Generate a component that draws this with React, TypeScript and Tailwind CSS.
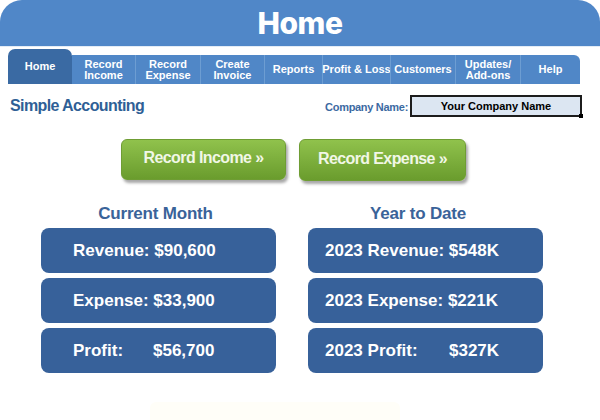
import React from "react";

const tabs = [
  { label: ["Record", "Income"], w: 63 },
  { label: ["Record", "Expense"], w: 65 },
  { label: ["Create", "Invoice"], w: 64 },
  { label: ["Reports"], w: 58 },
  { label: ["Profit & Loss"], w: 68 },
  { label: ["Customers"], w: 65 },
  { label: ["Updates/", "Add-ons"], w: 65 },
  { label: ["Help"], w: 60 },
];

const monthRows = [
  { label: "Revenue:", value: "$90,600", gap: false },
  { label: "Expense:", value: "$33,900", gap: false },
  { label: "Profit:", value: "$56,700", gap: true },
];

const yearRows = [
  { label: "2023 Revenue:", value: "$548K", gap: false },
  { label: "2023 Expense:", value: "$221K", gap: false },
  { label: "2023 Profit:", value: "$327K", gap: true },
];

function StatCard({
  label,
  value,
  gap,
  pad,
  labelW,
}: {
  label: string;
  value: string;
  gap: boolean;
  pad: string;
  labelW: string;
}) {
  return (
    <div
      className={`flex h-[45px] items-center rounded-[8px] bg-[#37619a] text-[17px] font-bold text-white ${pad}`}
    >
      {gap ? (
        <>
          <span className={labelW}>{label}</span>
          <span>{value}</span>
        </>
      ) : (
        <span>
          {label} {value}
        </span>
      )}
    </div>
  );
}

export default function App() {
  return (
    <div
      className="relative h-[420px] w-[600px] overflow-hidden bg-white"
      style={{ fontFamily: '"Liberation Sans", Arial, sans-serif' }}
    >
      {/* Title bar */}
      <div className="flex h-[46px] items-center justify-center rounded-t-[22px] bg-[#5087c8]">
        <span
          className="text-[30px] font-extrabold leading-none tracking-[-0.5px] text-white"
          style={{ fontFamily: "Inter, sans-serif" }}
        >
          Home
        </span>
      </div>
      <div className="h-[1px] bg-[#e3ecf6]" />

      {/* Tab bar */}
      <div className="ml-[8px] mt-[2px] flex h-[35px] w-[572px] items-end">
        <div className="flex h-[35px] w-[64px] items-center justify-center rounded-t-[7px] bg-[#3a6aa3] text-[11px] font-bold text-white">
          Home
        </div>
        <div className="flex h-[29px] flex-1 rounded-tr-[6px] bg-[#5087c7]">
          {tabs.map((t, i) => (
            <div
              key={i}
              className={`flex flex-col items-center justify-center text-center text-[11px] font-bold leading-[11px] text-white ${
                i > 0 ? "border-l border-[#6d9dd2]" : ""
              }`}
              style={{ width: t.w }}
            >
              {t.label.map((l) => (
                <span key={l} className="whitespace-nowrap">
                  {l}
                </span>
              ))}
            </div>
          ))}
        </div>
      </div>

      {/* Title + company name */}
      <div className="mt-[11px] flex h-[22px] items-center justify-between pl-[10px] pr-[18px]">
        <span className="text-[16px] font-bold tracking-[-0.6px] text-[#2f5f96]">
          Simple Accounting
        </span>
        <div className="flex items-center gap-[2px]">
          <span className="pt-[3px] text-[11px] font-bold tracking-[-0.3px] text-[#3c6aa2]">
            Company Name:
          </span>
          <div className="relative flex h-[22px] w-[172px] items-center justify-center border-2 border-[#1c1c1c] bg-[#dce6f2] text-[11px] font-bold text-black">
            Your Company Name
            <div className="absolute -bottom-[3px] -right-[3px] h-[4px] w-[4px] bg-black" />
          </div>
        </div>
      </div>

      {/* Green buttons */}
      <div className="mt-[22px] flex gap-[13px] pl-[121px]">
        <button className="flex h-[41px] w-[165px] items-center justify-center rounded-[6px] border border-[#6f9d34] bg-gradient-to-b from-[#90c24c] to-[#6a9c2d] pb-[3px] text-[16px] font-bold tracking-[-0.6px] text-[#f1f7e6] shadow-[2px_3px_3px_rgba(0,0,0,0.35)]">
          Record Income »
        </button>
        <button className="flex h-[42px] w-[167px] items-center justify-center rounded-[6px] border border-[#6f9d34] bg-gradient-to-b from-[#90c24c] to-[#6a9c2d] pb-[3px] text-[16px] font-bold tracking-[-0.6px] text-[#f1f7e6] shadow-[2px_3px_3px_rgba(0,0,0,0.35)]">
          Record Expense »
        </button>
      </div>

      {/* Summary columns */}
      <div className="mt-[23px] flex gap-[32px] pl-[41px]">
        <div className="flex w-[235px] flex-col">
          <div className="h-[24px] pr-[6px] text-center text-[17px] font-bold leading-[20px] tracking-[-0.2px] text-[#3a6399]">
            Current Month
          </div>
          <div className="flex flex-col gap-[5px]">
            {monthRows.map((r) => (
              <StatCard key={r.label} {...r} pad="pl-[32px]" labelW="w-[80px]" />
            ))}
          </div>
        </div>
        <div className="flex w-[235px] flex-col">
          <div className="h-[24px] pr-[15px] text-center text-[17px] font-bold leading-[20px] tracking-[-0.2px] text-[#3a6399]">
            Year to Date
          </div>
          <div className="flex flex-col gap-[5px]">
            {yearRows.map((r) => (
              <StatCard key={r.label} {...r} pad="pl-[17px]" labelW="w-[124px]" />
            ))}
          </div>
        </div>
      </div>

      {/* faint faded element at bottom */}
      <div className="absolute bottom-0 left-[150px] h-[18px] w-[250px] rounded-t-[6px] bg-[#fffef8]" />
    </div>
  );
}
